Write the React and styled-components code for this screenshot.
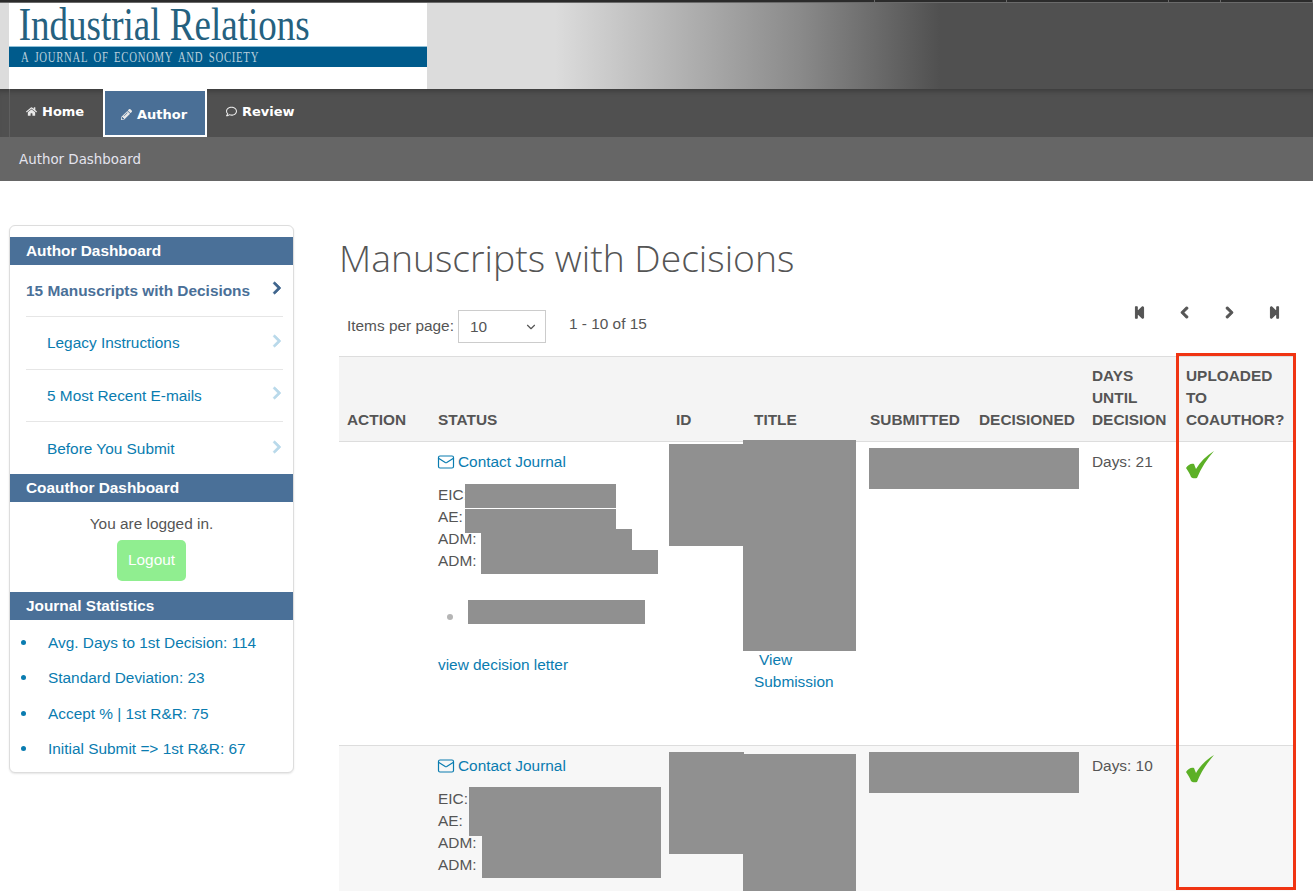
import React from 'react';
import styled, { createGlobalStyle } from 'styled-components';
import { ChevronDown, Mail } from 'lucide-react';
import { FaHome, FaPencilAlt, FaRegComment, FaStepBackward, FaStepForward, FaChevronLeft, FaChevronRight } from 'react-icons/fa';

const GlobalStyle = createGlobalStyle`
  html, body { margin: 0; padding: 0; height: 891px; overflow: hidden; background: #fff; }
  body { font-family: "Liberation Sans", Arial, sans-serif; font-size: 15.4px; color: #555; }
  * { box-sizing: border-box; }
`;

const Page = styled.div`
  height: 891px;
  overflow: hidden;
`;

const TopStrip = styled.div`
  display: flex;
  height: 3px;
`;

const StripTab = styled.div`
  width: ${(p) => p.$w}px;
  flex: ${(p) => (p.$fill ? 1 : 'none')};
  background: #2b2b2b;
  border-bottom: 1px solid #6a6a6a;
  border-right: 1px solid #6a6a6a;
`;

const Banner = styled.div`
  height: 86px;
  padding-left: 9px;
  background: linear-gradient(90deg, #dcdcdc 0, #dcdcdc 555px, #8a8a8a 800px, #505050 940px, #505050 100%);
`;

const Logo = styled.div`
  width: 418px;
  height: 86px;
  padding-top: 4px;
  background: #fff;
`;

const LogoTitle = styled.div`
  height: 40px;
  padding-left: 12px;
  font-family: "Liberation Serif", serif;
  font-size: 46px;
  line-height: 36px;
  color: #25617f;
  white-space: nowrap;
  transform-origin: left top;
  transform: scaleX(0.805);
`;

const LogoBar = styled.div`
  height: 21px;
  margin-top: -1px;
  padding-left: 12px;
  background: #005b8c;
  border-top: 1px solid #8fc0d8;
  white-space: nowrap;
`;

const LogoTagline = styled.span`
  display: inline-block;
  color: #b9cfdc;
  font-family: "Liberation Serif", serif;
  font-size: 15px;
  line-height: 20px;
  letter-spacing: 1px;
  word-spacing: 3px;
  transform-origin: left center;
  transform: scaleX(0.715);
`;

const NavBar = styled.nav`
  display: flex;
  height: 48px;
  padding-left: 9px;
  background: #505050;
  box-shadow: inset 0 6px 6px -5px rgba(0, 0, 0, 0.35);
`;

const NavItem = styled.a`
  display: flex;
  align-items: center;
  gap: 5px;
  height: 100%;
  width: ${(p) => p.$w}px;
  padding: ${(p) => (p.$active ? '3px 0 0 16px' : `0 0 4px ${p.$pad}px`)};
  color: #fff;
  font-family: "DejaVu Sans", Verdana, sans-serif;
  font-size: 13px;
  font-weight: 700;
  background: ${(p) => (p.$active ? '#4a6f96' : 'transparent')};
  border: ${(p) => (p.$active ? '2px solid #fff' : 'none')};
  border-left: ${(p) => (p.$active ? '2px solid #fff' : p.$rule ? '1px solid #5f5f5f' : 'none')};
  svg { font-size: 11px; color: #e8e8e8; }
`;

const SubNav = styled.div`
  height: 44px;
  display: flex;
  align-items: center;
  padding-left: 19px;
  background: #666;
  color: #e4e4ee;
  font-family: "DejaVu Sans", Verdana, sans-serif;
  font-size: 13.4px;
`;

const Main = styled.div`
  position: relative;
  display: flex;
  align-items: flex-start;
  padding: 44px 0 0 9px;
`;

const Sidebar = styled.aside`
  width: 285px;
  height: 548px;
  flex: none;
  padding-top: 11px;
  background: #fff;
  border: 1px solid #ddd;
  border-radius: 6px;
  box-shadow: 0 1px 2px rgba(0, 0, 0, 0.1);
  overflow: hidden;
`;

const PanelTitle = styled.div`
  height: 28px;
  padding-left: 16px;
  line-height: 28px;
  background: #4a7098;
  color: #fff;
  font-weight: 700;
`;

const MenuRow = styled.a`
  display: flex;
  align-items: center;
  justify-content: space-between;
  height: ${(p) => p.$h}px;
  margin: 0 10px 0 16px;
  padding: ${(p) => (p.$last ? 2 : 0)}px 0 0 ${(p) => (p.$current ? 0 : 21)}px;
  border-bottom: ${(p) => (p.$last ? 'none' : '1px solid #e6e6e6')};
  color: ${(p) => (p.$current ? '#4a7098' : '#0a7cb0')};
  font-weight: ${(p) => (p.$current ? 700 : 400)};
  svg {
    margin: -5px -1px 0 0;
    font-size: 14px;
    stroke-width: 30;
    color: ${(p) => (p.$current ? '#3f658d' : '#b9d9ea')};
  }
`;

const LoginBox = styled.div`
  display: flex;
  flex-direction: column;
  align-items: center;
  height: 90px;
  padding-top: 13px;
  color: #555;
`;

const LogoutButton = styled.button`
  width: 69px;
  height: 41px;
  margin-top: 7px;
  padding: 0 0 2px;
  border: none;
  border-radius: 5px;
  background: #90ee90;
  color: #fff;
  font: inherit;
`;

const StatList = styled.ul`
  margin: 0;
  padding: 5px 0 0 38px;
  list-style: none;
  color: #0a7cb0;
`;

const StatItem = styled.li`
  position: relative;
  height: 35.3px;
  line-height: 35px;
  &::before {
    content: "";
    position: absolute;
    left: -27px;
    top: 15px;
    width: 5px;
    height: 5px;
    border-radius: 50%;
    background: #0a7cb0;
  }
`;

const Content = styled.main`
  width: 954px;
  margin-left: 45px;
`;

const PageTitle = styled.h1`
  margin: 8px 0 0;
  font-family: "Open Sans", sans-serif;
  font-weight: 300;
  font-size: 37.3px;
  line-height: 50px;
  color: #555;
`;

const Toolbar = styled.div`
  display: flex;
  height: 73px;
  padding: 27px 0 0 8px;
`;

const PerPageLabel = styled.span`
  margin-top: 7px;
`;

const PerPageSelect = styled.div`
  display: flex;
  align-items: center;
  justify-content: space-between;
  width: 88px;
  height: 33px;
  margin-left: 4px;
  padding: 0 7px 0 11px;
  border: 1px solid #ccc;
  svg { color: #555; }
`;

const RangeLabel = styled.span`
  margin: 5px 0 0 23px;
`;

const Pager = styled.div`
  display: flex;
  gap: 30px;
  margin: -4px 0 0 auto;
  padding-right: 11px;
  color: #555;
  svg { display: block; width: 15px; height: 13px; stroke-width: 40; }
`;

const Table = styled.table`
  width: 954px;
  table-layout: fixed;
  border-collapse: collapse;
`;

const HeadCell = styled.th`
  width: ${(p) => p.$w}px;
  height: 85px;
  padding: 8px 8px 10px;
  vertical-align: bottom;
  background: #f4f4f4;
  border-top: 1px solid #ddd;
  border-bottom: 1px solid #ddd;
  text-align: left;
  line-height: 22px;
  color: #555;
`;

const Row = styled.tr`
  height: ${(p) => p.$h}px;
  background: ${(p) => (p.$alt ? '#f7f7f7' : '#fff')};
  border-bottom: 1px solid #ddd;
`;

const Cell = styled.td`
  position: relative;
  padding: 9px 8px;
  vertical-align: top;
  line-height: 22px;
`;

const TextLink = styled.a`
  display: block;
  color: #0a7cb0;
`;

const ContactLink = styled(TextLink)`
  display: flex;
  align-items: center;
  gap: 3.5px;
  svg { margin-left: -1.5px; }
`;

const People = styled.div`
  margin-top: 11px;
`;

const Person = styled.div`
  height: 22px;
`;

const Bullet = styled.div`
  width: 6px;
  height: 6px;
  margin: 42px 0 0 9px;
  border-radius: 50%;
  background: #b5b5b5;
`;

const DecisionLink = styled(TextLink)`
  margin-top: 34px;
`;

const SubmissionLink = styled(TextLink)`
  position: absolute;
  left: 8px;
  top: 207px;
  span { display: block; }
  span:first-child { padding-left: 5px; }
`;

/* grey blocks that hide names in the original, sitting over the table */
const Redaction = styled.div`
  position: absolute;
  left: ${(p) => p.$x}px;
  top: ${(p) => p.$y}px;
  width: ${(p) => p.$w}px;
  height: ${(p) => p.$h}px;
  background: #909090;
`;

const CheckMark = styled.svg`
  display: block;
  width: 28px;
  height: 28px;
`;

const Highlight = styled.div`
  position: absolute;
  left: 1176px;
  top: 172px;
  width: 120px;
  height: 537px;
  border: 3px solid #f03412;
  pointer-events: none;
`;

const Check = () => (
  <CheckMark viewBox="0 0 28 28">
    <path d="M0 17 C2 14 5 12 8 13 L10 18 C14 11 20 5 28 0 C21 8 15 17 11 27 C9 27.5 6 27.5 5 26 C4 23 2 20 0 17 Z" fill="#5cb026" />
  </CheckMark>
);

const columns = [
  ['ACTION', 91],
  ['STATUS', 238],
  ['ID', 78],
  ['TITLE', 116],
  ['SUBMITTED', 109],
  ['DECISIONED', 113],
  ['DAYS UNTIL DECISION', 94],
  ['UPLOADED TO COAUTHOR?', 115],
];

const stripTabs = [875, 132, 162, 52];

export default function App() {
  return (
    <Page>
      <GlobalStyle />
      <TopStrip>
        {stripTabs.map((w) => <StripTab key={w} $w={w} />)}
        <StripTab $fill />
      </TopStrip>
      <Banner>
        <Logo>
          <LogoTitle>Industrial Relations</LogoTitle>
          <LogoBar><LogoTagline>A JOURNAL OF ECONOMY AND SOCIETY</LogoTagline></LogoBar>
        </Logo>
      </Banner>
      <NavBar>
        <NavItem $w={94} $pad={16} $rule><FaHome />Home</NavItem>
        <NavItem $w={104} $active><FaPencilAlt />Author</NavItem>
        <NavItem $w={100} $pad={19}><FaRegComment />Review</NavItem>
      </NavBar>
      <SubNav>Author Dashboard</SubNav>
      <Main>
        <Sidebar>
          <PanelTitle>Author Dashboard</PanelTitle>
          <MenuRow $h={52} $current>15 Manuscripts with Decisions<FaChevronRight /></MenuRow>
          <MenuRow $h={53}>Legacy Instructions<FaChevronRight /></MenuRow>
          <MenuRow $h={52}>5 Most Recent E-mails<FaChevronRight /></MenuRow>
          <MenuRow $h={52} $last>Before You Submit<FaChevronRight /></MenuRow>
          <PanelTitle>Coauthor Dashboard</PanelTitle>
          <LoginBox>
            You are logged in.
            <LogoutButton>Logout</LogoutButton>
          </LoginBox>
          <PanelTitle>Journal Statistics</PanelTitle>
          <StatList>
            <StatItem>Avg. Days to 1st Decision: 114</StatItem>
            <StatItem>Standard Deviation: 23</StatItem>
            <StatItem>Accept % | 1st R&amp;R: 75</StatItem>
            <StatItem>Initial Submit =&gt; 1st R&amp;R: 67</StatItem>
          </StatList>
        </Sidebar>
        <Content>
          <PageTitle>Manuscripts with Decisions</PageTitle>
          <Toolbar>
            <PerPageLabel>Items per page:</PerPageLabel>
            <PerPageSelect>10<ChevronDown size={14} strokeWidth={2} /></PerPageSelect>
            <RangeLabel>1 - 10 of 15</RangeLabel>
            <Pager>
              <FaStepBackward />
              <FaChevronLeft />
              <FaChevronRight />
              <FaStepForward />
            </Pager>
          </Toolbar>
          <Table>
            <thead>
              <tr>
                {columns.map(([label, w]) => (
                  <HeadCell key={label} $w={w}>{label}</HeadCell>
                ))}
              </tr>
            </thead>
            <tbody>
              <Row $h={304}>
                <Cell />
                <Cell>
                  <ContactLink><Mail size={18} strokeWidth={1.6} />Contact Journal</ContactLink>
                  <People>
                    <Person>EIC:</Person>
                    <Person>AE:</Person>
                    <Person>ADM:</Person>
                    <Person>ADM:</Person>
                  </People>
                  <Bullet />
                  <DecisionLink>view decision letter</DecisionLink>
                  <Redaction $x={35} $y={42} $w={151} $h={24} />
                  <Redaction $x={51} $y={87} $w={151} $h={23} />
                  <Redaction $x={35} $y={67} $w={151} $h={24} />
                  <Redaction $x={51} $y={108} $w={177} $h={24} />
                  <Redaction $x={38} $y={158} $w={177} $h={24} />
                </Cell>
                <Cell>
                  <Redaction $x={1} $y={2} $w={75} $h={102} />
                </Cell>
                <Cell>
                  <Redaction $x={-3} $y={-2} $w={113} $h={211} />
                  <SubmissionLink><span>View</span><span>Submission</span></SubmissionLink>
                </Cell>
                <Cell>
                  <Redaction $x={7} $y={6} $w={210} $h={41} />
                </Cell>
                <Cell />
                <Cell>Days: 21</Cell>
                <Cell><Check /></Cell>
              </Row>
              <Row $h={304} $alt>
                <Cell />
                <Cell>
                  <ContactLink><Mail size={18} strokeWidth={1.6} />Contact Journal</ContactLink>
                  <People>
                    <Person>EIC:</Person>
                    <Person>AE:</Person>
                    <Person>ADM:</Person>
                    <Person>ADM:</Person>
                  </People>
                  <Redaction $x={39} $y={41} $w={14} $h={49} />
                  <Redaction $x={52} $y={41} $w={179} $h={91} />
                </Cell>
                <Cell>
                  <Redaction $x={1} $y={6} $w={75} $h={102} />
                </Cell>
                <Cell>
                  <Redaction $x={-3} $y={8} $w={113} $h={200} />
                </Cell>
                <Cell>
                  <Redaction $x={7} $y={6} $w={210} $h={41} />
                </Cell>
                <Cell />
                <Cell>Days: 10</Cell>
                <Cell><Check /></Cell>
              </Row>
            </tbody>
          </Table>
        </Content>
        <Highlight />
      </Main>
    </Page>
  );
}
